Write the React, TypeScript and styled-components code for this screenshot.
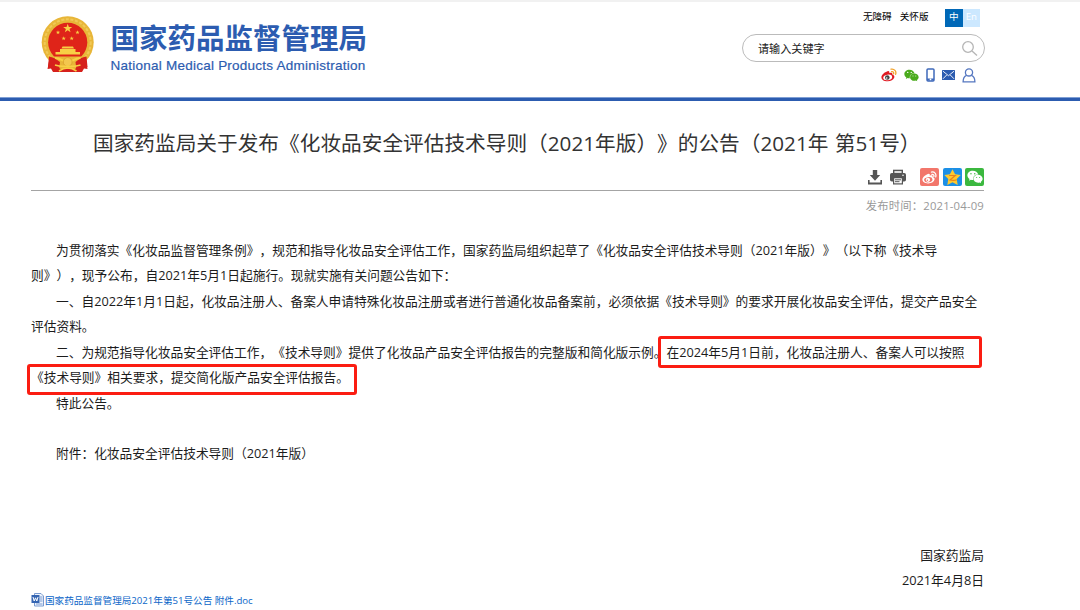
import React from 'react';
import styled, { createGlobalStyle } from 'styled-components';
import { FaWeixin } from 'react-icons/fa';

const GlobalStyle = createGlobalStyle`
  * { box-sizing: border-box; }
  body {
    margin: 0;
    background: #fff;
    color: #1c1c1c;
    font-family: 'Open Sans', 'Noto Sans CJK SC', sans-serif;
    text-spacing-trim: space-all;
    overflow: hidden;
  }
`;

const Page = styled.div`
  position: relative;
  width: 1080px;
  height: 610px;
  overflow: hidden;
  border-top: 2px solid #f1f1f1;
`;

const Header = styled.header`
  display: flex;
  justify-content: space-between;
  height: 99px;
  padding: 0 95px 0 41px;
  border-bottom: 3px solid #2c5cb0;
  box-shadow: inset 0 -1px #7f9fd4;
`;

const Brand = styled.div`
  display: flex;
  padding-top: 14px;
  color: #2c5cb0;
`;

const BrandText = styled.div`
  display: flex;
  flex-direction: column;
  margin-left: 15.5px;
  white-space: nowrap;
`;

const BrandName = styled.div`
  margin-top: 1px;
  font: 700 28.5px/40px 'Noto Sans CJK SC', sans-serif;
`;

const BrandLatin = styled.div`
  margin-top: -1px;
  font: 13.5px/20px 'Liberation Sans', sans-serif;
  letter-spacing: 0.24px;
  -webkit-text-stroke: 0.2px #2c5cb0;
`;

const Tools = styled.div`
  display: flex;
  flex-direction: column;
  align-items: flex-end;
  width: 243px;
  padding-top: 7px;
`;

const TopLinks = styled.nav`
  display: flex;
  align-items: center;
  height: 18px;
  padding-right: 5px;
  font-size: 9.6px;
  line-height: 16px;
  color: #000;
`;

const TopLink = styled.span<{ $gap: number }>`
  margin-right: ${p => p.$gap}px;
  padding-bottom: 2px;
`;

const Lang = styled.span<{ $active?: boolean }>`
  width: 17.5px;
  height: 18px;
  background: ${p => (p.$active ? '#0068b7' : '#cce8ff')};
  color: #fff;
  text-align: center;
  line-height: 16px;
`;

const Search = styled.div`
  display: flex;
  align-items: center;
  justify-content: space-between;
  width: 243px;
  height: 28px;
  margin-top: 7px;
  padding: 0 6px 0 15px;
  border: 1px solid #bbb;
  border-radius: 14px;
  font-size: 11.1px;
  color: #222;
`;

const Socials = styled.div`
  display: flex;
  align-items: center;
  height: 16px;
  margin-top: 5px;
  padding-right: 9.5px;
  gap: 7px;
`;

const Article = styled.main`
  padding: 0 96px 0 31px;
`;

const Title = styled.h1`
  margin: 24px 0 0;
  padding-left: 62px;
  font-size: 20.65px;
  line-height: 36px;
  font-weight: 400;
  letter-spacing: 0.03px;
  word-spacing: 1px;
  color: #333;
  white-space: nowrap;
`;

const Actions = styled.div`
  display: flex;
  justify-content: flex-end;
  align-items: center;
  height: 30px;
  padding-top: 3px;
  border-bottom: 1px solid #a4a4a4;
`;

const ActionIcon = styled.span<{ $gap: number }>`
  display: flex;
  margin-right: ${p => p.$gap}px;
`;

const Share = styled.span<{ $bg: string }>`
  display: flex;
  align-items: center;
  justify-content: center;
  width: 19px;
  height: 18px;
  margin-left: 3.5px;
  border-radius: 2px;
  background: ${p => p.$bg};
  color: #fff;
`;

const Published = styled.div`
  height: 30px;
  font-size: 11.3px;
  line-height: 29px;
  letter-spacing: 0.18px;
  text-align: right;
  color: #999;
`;

const Body = styled.section`
  margin-top: 17px;
  font-size: 12.72px;
  line-height: 25.43px;
`;

const Line = styled.div<{ $indent?: boolean }>`
  height: 25.43px;
  padding-left: ${p => (p.$indent ? 25 : 0)}px;
  white-space: nowrap;
`;

const Signature = styled.div`
  margin-top: 76px;
  font-size: 12.78px;
  line-height: 25.43px;
  text-align: right;
`;

const Attachment = styled.a`
  display: flex;
  align-items: center;
  height: 16px;
  margin-top: -2px;
  font-size: 9.6px;
  color: #0b66c8;
  white-space: nowrap;
`;

const Highlight = styled.div<{ $x: number; $y: number; $w: number; $h: number }>`
  position: absolute;
  left: ${p => p.$x}px;
  top: ${p => p.$y}px;
  width: ${p => p.$w}px;
  height: ${p => p.$h}px;
  border: 3px solid #fb1d12;
  border-radius: 3px;
`;

const STAR = 'M0 -5 L1.2 -1.6 L4.8 -1.6 L1.9 0.6 L3 4 L0 1.9 L-3 4 L-1.9 0.6 L-4.8 -1.6 L-1.2 -1.6Z';

const Emblem = () => (
  <svg width="54" height="59" viewBox="0 0 54 59">
    <path d="M9 40 L6.5 53 L10 52.5 L12 56 H41 L43 52.5 L46.5 53 L44.5 40Z" fill="#d6201c" />
    <circle cx="26.7" cy="26.3" r="26" fill="#e8b638" />
    <circle cx="26.7" cy="26.3" r="23" fill="none" stroke="#f1c957" strokeWidth="2" strokeDasharray="3 1.6" />
    <circle cx="26.7" cy="26.3" r="19.6" fill="#df2419" />
    <g fill="#f8cf45">
      <path d={STAR} transform="translate(26.7 12.5) scale(.95)" />
      <path d={STAR} transform="translate(17 16.5) scale(.45)" />
      <path d={STAR} transform="translate(36.5 16.5) scale(.45)" />
      <path d={STAR} transform="translate(22.7 22.5) scale(.45)" />
      <path d={STAR} transform="translate(30.7 22.5) scale(.45)" />
      <path d="M20.5 32.5 L21.5 30.5 H32 L33 32.5Z M19 33 H34.5 V36 H19Z M14.5 36 H39 V38.5 H14.5Z" />
    </g>
    <path d="M8 40.5 H45.5 L40 48 L34 53 H19.5 L13 48Z" fill="#e8b638" />
    <path d="M8 40.5 C12 41 15 43 19 46 L18 54 L7 51Z M45.5 40.5 C41 41 38 43 34.5 46 L35.5 54 L46.5 51Z" fill="#d6201c" />
    <path d="M14 42 C20 42 22 46 26.7 46 C31.5 46 33.5 42 39.5 42" fill="none" stroke="#f8cf45" strokeWidth="2" />
    <circle cx="26.7" cy="46" r="4.4" fill="#f3c74e" stroke="#d99a27" strokeWidth=".7" />
    <path d="M14 49 Q20 51 26.7 50 Q33 51 39.5 49 M18 55 Q26.7 49 35.5 55" fill="none" stroke="#f8cf45" strokeWidth="1.6" />
  </svg>
);

const Weibo = ({ size, body, waves, eye }: { size: number; body: string; waves: string; eye: string }) => (
  <svg width={size} height={size} viewBox="0 0 16 16">
    <path d="M6.6 4.2C8 3.8 8.7 4.7 8.2 6C10.4 5.2 11.8 5.7 11.3 7.5C13 8 13.7 9 13.3 10.5C12.6 13 9.6 14.4 6.4 14.3C3 14.2 .4 12.6 .4 10.2C.4 7.8 3.6 5 6.6 4.2Z" fill={body} />
    <ellipse cx="6.7" cy="10.4" rx="4.5" ry="2.8" fill={eye} transform="rotate(-8 6.7 10.4)" />
    <circle cx="6.3" cy="10.5" r="2.3" fill={body === '#fff' ? '#fff' : '#444'} />
    <circle cx="5.7" cy="11" r=".8" fill={eye} />
    <path d="M10 2.2C13.3 1.5 15.7 4.3 14.6 7.4M10.6 4.6C12.2 4.3 13.1 5.5 12.6 6.9" fill="none" stroke={waves} strokeWidth="1.3" strokeLinecap="round" />
  </svg>
);

const SearchIcon = () => (
  <svg width="17" height="17" viewBox="0 0 17 17" fill="none" stroke="#b5b5b5" strokeWidth="1.3">
    <circle cx="7" cy="7" r="5.3" />
    <path d="M11 11 L16 15.5" />
  </svg>
);

const Phone = () => (
  <svg width="9" height="14" viewBox="0 0 9 14">
    <rect x="1" y="1" width="7" height="12" rx="1" fill="#fff" stroke="#3f69bb" strokeWidth="1.5" />
    <path d="M1 10.5H8V12.5H1Z" fill="#3f69bb" />
    <circle cx="4.5" cy="11.3" r=".9" fill="#fff" />
  </svg>
);

const Mail = () => (
  <svg width="13" height="10" viewBox="0 0 13 10">
    <rect width="13" height="10" rx=".6" fill="#2c5cb0" />
    <path d="M1 1.2 L6.5 5.7 L12 1.2 M1 8.8 L4.7 5 M12 8.8 L8.3 5" fill="none" stroke="#fff" strokeWidth=".9" />
  </svg>
);

const Person = () => (
  <svg width="14" height="15" viewBox="0 0 14 15" fill="none" stroke="#5577c0" strokeWidth="1.3">
    <circle cx="7" cy="4.4" r="3.6" />
    <path d="M4.6 7.4 C2 8.4 1.1 10.6 1.1 13.8 H12.9 C12.9 10.6 12 8.4 9.4 7.4" />
  </svg>
);

const Download = () => (
  <svg width="14" height="15" viewBox="0 0 14 15" fill="#555">
    <path d="M4.8 0H9.2V5H12.2L7 10.8L1.8 5H4.8Z" />
    <path d="M0 10H1.6V12.4H12.4V10H14V14.6H0Z" />
  </svg>
);

const Printer = () => (
  <svg width="16" height="16" viewBox="0 0 16 16">
    <path d="M3 .7H13V4H3Z" fill="#555" />
    <path d="M4.4 2H11.6V4H4.4Z" fill="#ddd" />
    <rect y="4" width="16" height="8.5" rx="1.8" fill="#555" />
    <path d="M3 8.5H13V15.5H3Z" fill="#555" />
    <path d="M4.2 9.3H11.8V14.3H4.2Z" fill="#fff" />
    <path d="M5 10.8H11M5 12.7H9.5" stroke="#555" strokeWidth="1" />
    <circle cx="13" cy="6.3" r=".8" fill="#fff" />
  </svg>
);

const QzoneStar = () => (
  <svg width="17" height="17" viewBox="-8.5 -8.5 17 17">
    <path d="M0 -8.2 L2.6 -3.2 L8.2 -2.4 L4.2 1.6 L5.2 7.6 L0 4.8 L-5.2 7.6 L-4.2 1.6 L-8.2 -2.4 L-2.6 -3.2Z" fill="#fdc92e" />
    <path d="M-3.4 -2 H2.8 L-2.5 2.5 C0 3.2 2.5 3 4.2 2.2" fill="none" stroke="#e8821a" strokeWidth="1.2" />
  </svg>
);

const WordDoc = () => (
  <svg width="14" height="14" viewBox="0 0 14 14">
    <path d="M3.5 .5H10L12.5 3V13H3.5Z" fill="#eef4fd" stroke="#7a9bd0" />
    <path d="M9 4H11.5M9 6H11.5M9 8H11.5M5 11H11.5" stroke="#5c84c4" strokeWidth=".8" />
    <rect x=".5" y="2" width="8" height="8" fill="#3565b2" />
    <path d="M2 4L3.2 8L4.5 4.8L5.8 8L7 4" fill="none" stroke="#fff" />
  </svg>
);

export default function App() {
  return (
    <Page>
      <GlobalStyle />
      <Header>
        <Brand>
          <Emblem />
          <BrandText>
            <BrandName>国家药品监督管理局</BrandName>
            <BrandLatin>National Medical Products Administration</BrandLatin>
          </BrandText>
        </Brand>
        <Tools>
          <TopLinks>
            <TopLink $gap={8}>无障碍</TopLink>
            <TopLink $gap={16.5}>关怀版</TopLink>
            <Lang $active>中</Lang>
            <Lang>En</Lang>
          </TopLinks>
          <Search>
            <span>请输入关键字</span>
            <SearchIcon />
          </Search>
          <Socials>
            <Weibo size={16} body="#e01a22" waves="#f2a32c" eye="#fff" />
            <FaWeixin size={15} color="#4aab1c" />
            <Phone />
            <Mail />
            <Person />
          </Socials>
        </Tools>
      </Header>
      <Article>
        <Title>国家药监局关于发布《化妆品安全评估技术导则（2021年版）》的公告（2021年 第51号）</Title>
        <Actions>
          <ActionIcon $gap={8}><Download /></ActionIcon>
          <ActionIcon $gap={11}><Printer /></ActionIcon>
          <Share $bg="#f2766b"><Weibo size={15} body="#fff" waves="#fff" eye="#f2766b" /></Share>
          <Share $bg="#1b8fe6"><QzoneStar /></Share>
          <Share $bg="#3bb83f"><FaWeixin size={16} /></Share>
        </Actions>
        <Published>发布时间：2021-04-09</Published>
        <Body>
          <Line $indent>为贯彻落实《化妆品监督管理条例》，规范和指导化妆品安全评估工作，国家药监局组织起草了《化妆品安全评估技术导则（2021年版）》（以下称《技术导</Line>
          <Line>则》），现予公布，自2021年5月1日起施行。现就实施有关问题公告如下：</Line>
          <Line $indent>一、自2022年1月1日起，化妆品注册人、备案人申请特殊化妆品注册或者进行普通化妆品备案前，必须依据《技术导则》的要求开展化妆品安全评估，提交产品安全</Line>
          <Line>评估资料。</Line>
          <Line $indent>二、为规范指导化妆品安全评估工作，《技术导则》提供了化妆品产品安全评估报告的完整版和简化版示例。在2024年5月1日前，化妆品注册人、备案人可以按照</Line>
          <Line>《技术导则》相关要求，提交简化版产品安全评估报告。</Line>
          <Line $indent>特此公告。</Line>
          <Line />
          <Line $indent>附件：化妆品安全评估技术导则（2021年版）</Line>
        </Body>
        <Signature>
          <div>国家药监局</div>
          <div>2021年4月8日</div>
        </Signature>
        <Attachment>
          <WordDoc />
          <span>国家药品监督管理局2021年第51号公告 附件.doc</span>
        </Attachment>
      </Article>
      <Highlight $x={658} $y={334} $w={324} $h={32} />
      <Highlight $x={27} $y={362} $w={330} $h={31} />
    </Page>
  );
}
